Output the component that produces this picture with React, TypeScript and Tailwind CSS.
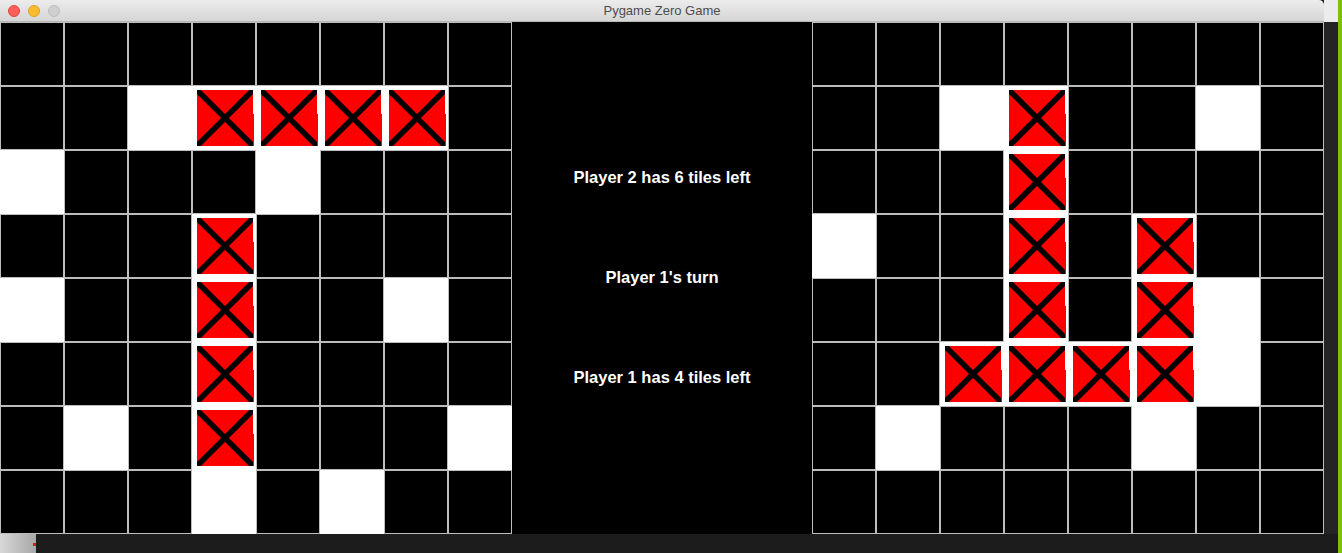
import React from 'react'

// b = black tile, w = white (miss), x = hit
const leftBoard = [
  'bbbbbbbb',
  'bbwxxxxb',
  'wbbbwbbb',
  'bbbxbbbb',
  'wbbxbbwb',
  'bbbxbbbb',
  'bwbxbbbw',
  'bbbwbwbb',
]

const rightBoard = [
  'bbbbbbbb',
  'bbwxbbwb',
  'bbbxbbbb',
  'wbbxbxbb',
  'bbbxbxwb',
  'bbxxxxwb',
  'bwbbbwbb',
  'bbbbbbbb',
]

const HitTile = () => (
  <div className="w-16 h-16 bg-white">
    <svg width="64" height="64" viewBox="0 0 64 64">
      <defs>
        <clipPath id="tileclip">
          <rect x="5" y="4" width="56" height="56" />
        </clipPath>
      </defs>
      <rect x="5" y="4" width="56" height="56" fill="#ff0000" />
      <rect x="60" y="28" width="2" height="32" fill="#ff0000" />
      <g clipPath="url(#tileclip)" stroke="#000" strokeWidth="5.5">
        <line x1="5" y1="4" x2="61" y2="60" />
        <line x1="61" y1="4" x2="5" y2="60" />
      </g>
    </svg>
  </div>
)

const Tile = ({ kind }: { kind: string }) => {
  if (kind === 'x') return <HitTile />
  if (kind === 'w') return <div className="w-16 h-16 bg-white" />
  return <div className="w-16 h-16 bg-black border border-[#bdbdbd]" />
}

const Board = ({ rows }: { rows: string[] }) => (
  <div className="grid grid-cols-8 w-[512px] h-[512px]">
    {rows.map((row, r) =>
      row.split('').map((kind, c) => <Tile key={`${r}-${c}`} kind={kind} />)
    )}
  </div>
)

export default function App() {
  return (
    <div
      className="w-[1342px] h-[553px] flex overflow-hidden bg-[#1e1e1e]"
      style={{ fontFamily: '"Liberation Sans", Arial, sans-serif' }}
    >
      <div className="w-[1338px] flex flex-col">
        <div className="h-[534px] flex">
          <div className="w-[1324px] flex flex-col">
            <div className="relative h-[22px] rounded-tr-[5px] bg-gradient-to-b from-[#ececec] to-[#d6d6d6] border-b border-[#b8b8b8] flex items-center justify-center">
              <div className="absolute left-[8px] top-[5px] flex gap-[8px]">
                <span className="w-3 h-3 rounded-full bg-[#fc5f57] border border-[#df4744]" />
                <span className="w-3 h-3 rounded-full bg-[#fdbc2e] border border-[#de9f22]" />
                <span className="w-3 h-3 rounded-full bg-[#cfcfcf] border border-[#bdbdbd]" />
              </div>
              <span className="text-[13px] text-[#4d4d4d] leading-none">Pygame Zero Game</span>
            </div>
            <div className="flex h-[512px]">
              <Board rows={leftBoard} />
              <div className="w-[300px] bg-black flex flex-col items-center pt-[145px] gap-[80px] text-white font-bold text-[16.5px] leading-[20px]">
                <p>Player 2 has 6 tiles left</p>
                <p>Player 1's turn</p>
                <p>Player 1 has 4 tiles left</p>
              </div>
              <Board rows={rightBoard} />
            </div>
          </div>
          <div className="w-[14px] flex flex-col">
            <div className="h-[22px] bg-[#ececec]" />
            <div className="flex-1 bg-[#242424]" />
          </div>
        </div>
        <div className="h-[19px] flex">
          <div className="w-[36px] bg-gradient-to-r from-[#d8d8d8] to-[#a8a8a8] relative">
            <span className="absolute right-[0px] top-[9px] w-[3px] h-[3px] bg-[#d02020]" />
          </div>
          <div className="flex-1 bg-[#1c1c1c]" />
        </div>
      </div>
      <div className="w-[4px] bg-[#79c10a]" />
    </div>
  )
}
